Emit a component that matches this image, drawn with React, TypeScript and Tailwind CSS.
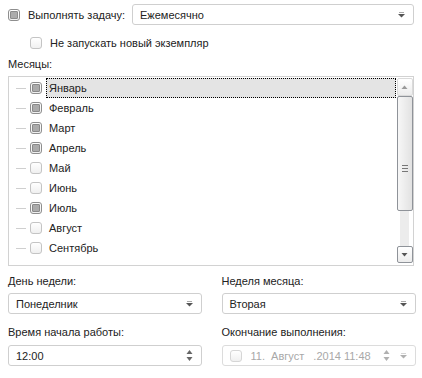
import React from "react";

const months = [
  { name: "Январь", on: true },
  { name: "Февраль", on: true },
  { name: "Март", on: true },
  { name: "Апрель", on: true },
  { name: "Май", on: false },
  { name: "Июнь", on: false },
  { name: "Июль", on: true },
  { name: "Август", on: false },
  { name: "Сентябрь", on: false },
];

function Check({ on, dim }: { on?: boolean; dim?: boolean }) {
  return (
    <span
      className={
        "flex h-[12px] w-[12px] shrink-0 items-center justify-center rounded-[3px] border bg-gradient-to-b from-white to-[#f0f0f0] " +
        (on ? "border-[#8e8e8e]" : dim ? "border-[#d6d6d6]" : "border-[#c4c4c4]")
      }
    >
      {on && <span className="h-[8px] w-[8px] rounded-[1px] border border-[#8a8a8a] bg-[#ababab]" />}
    </span>
  );
}

function Arrow({ color = "#555" }: { color?: string }) {
  return (
    <svg width="7" height="6" viewBox="0 0 7 6" className="shrink-0">
      <rect x="1" y="0" width="5" height="1" fill={color} opacity="0.5" />
      <path d="M0 2 H7 L3.5 5.5 Z" fill={color} />
    </svg>
  );
}

function Spin({ color = "#666" }: { color?: string }) {
  return (
    <svg width="7" height="13" viewBox="0 0 7 13" className="shrink-0">
      <path d="M3.5 1 L6.5 5 H0.5 Z" fill={color} />
      <path d="M0.5 8 H6.5 L3.5 12 Z" fill={color} />
    </svg>
  );
}

function Select({ text, className }: { text: string; className: string }) {
  return (
    <div
      className={
        "flex h-[21px] items-center justify-between rounded-[3px] border border-[#cfcfcf] bg-white pl-[7px] pr-[8px] " +
        className
      }
    >
      <span>{text}</span>
      <Arrow />
    </div>
  );
}

export default function App() {
  return (
    <div className="h-[378px] w-[422px] overflow-hidden whitespace-nowrap bg-white font-['Liberation_Sans',sans-serif] text-[11px] leading-[14px] text-[#222]">
      {/* run task row */}
      <div className="mt-[4px] flex h-[21px] items-center pl-[8px] pr-[8px]">
        <Check on />
        <span className="ml-[8px]">Выполнять задачу:</span>
        <Select text="Ежемесячно" className="ml-auto w-[282px]" />
      </div>

      <div className="mt-[11px] flex h-[14px] items-center pl-[30px]">
        <Check />
        <span className="ml-[8px]">Не запускать новый экземпляр</span>
      </div>

      <div className="mt-[7px] pl-[8px]">Месяцы:</div>

      {/* months list */}
      <div className="mx-[8px] mt-[5px] flex h-[190px] border border-[#d2d2d2] py-[1px] pl-[1px] pr-[0px]">
        <div className="flex-1">
          {months.map((m, i) => (
            <div key={m.name} className="flex h-[20px] items-center">
              <span className="ml-[6px] h-px w-[10px] bg-[#cfcfcf]" />
              <span className="ml-[4px]">
                <Check on={m.on} />
              </span>
              <div
                className={
                  "ml-[4px] flex h-[20px] flex-1 items-center pl-[2px] " +
                  (i === 0 ? "border border-dotted border-black bg-[#e4e4e4]" : "border border-transparent")
                }
              >
                {m.name}
              </div>
            </div>
          ))}
        </div>
        {/* scrollbar */}
        <div className="flex w-[17px] flex-col items-center">
          <div className="flex h-[18px] w-[16px] items-center justify-center rounded-[2px] border border-[#dadada] bg-gradient-to-b from-white to-[#ececec]">
            <svg width="7" height="4" viewBox="0 0 7 4">
              <path d="M0.5 4 H6.5 L3.5 0.5 Z" fill="#999" />
            </svg>
          </div>
          <div className="flex h-[115px] w-[16px] items-center justify-center rounded-[2px] border border-[#8f9399] bg-gradient-to-r from-[#f7f7f7] to-[#e2e2e2]">
            <div className="flex flex-col gap-[2px] pt-[30px]">
              <span className="h-px w-[6px] bg-[#777]" />
              <span className="h-px w-[6px] bg-[#777]" />
              <span className="h-px w-[6px] bg-[#777]" />
            </div>
          </div>
          <div className="w-[9px] flex-1 bg-[#ececec]" />
          <div className="mb-[1px] flex h-[17px] w-[16px] items-center justify-center rounded-[2px] border border-[#8f9399] bg-gradient-to-b from-white to-[#ececec]">
            <svg width="7" height="4" viewBox="0 0 7 4">
              <path d="M0.5 0 H6.5 L3.5 3.5 Z" fill="#555" />
            </svg>
          </div>
        </div>
      </div>

      {/* bottom fields */}
      <div className="mt-[8px] grid grid-cols-2 gap-x-[17px] px-[8px]">
        <div>
          <div className="h-[14px]">День недели:</div>
          <Select text="Понеделник" className="mt-[5px] w-[194px]" />
          <div className="mt-[11px] h-[14px]">Время начала работы:</div>
          <div className="mt-[6px] flex h-[21px] w-[194px] items-center justify-between rounded-[3px] border border-[#cfcfcf] bg-white pl-[7px] pr-[8px]">
            <span>12:00</span>
            <Spin />
          </div>
        </div>
        <div>
          <div className="h-[14px] pl-[2px]">Неделя месяца:</div>
          <Select text="Вторая" className="mt-[5px] ml-[2px] w-[194px]" />
          <div className="mt-[11px] h-[14px] pl-[2px]">Окончание выполнения:</div>
          <div className="mt-[6px] ml-[2px] flex h-[21px] w-[194px] items-center rounded-[3px] border border-[#dcdcdc] bg-white pl-[7px] pr-[8px] text-[#a8a8a8]">
            <Check dim />
            <span className="ml-[9px] w-[128px] overflow-hidden">11.&nbsp;&nbsp;Август&nbsp;&nbsp;&nbsp;.2014 11:48</span>
            <span className="ml-[4px]">
              <Spin color="#b0b0b0" />
            </span>
            <span className="ml-auto">
              <Arrow color="#b0b0b0" />
            </span>
          </div>
        </div>
      </div>
    </div>
  );
}
